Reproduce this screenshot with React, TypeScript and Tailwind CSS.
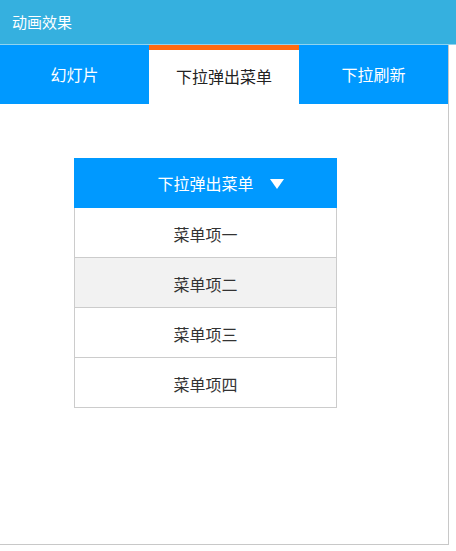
const font = { fontFamily: '"Microsoft YaHei", "Noto Sans CJK SC", sans-serif' };

const tabs = ["幻灯片", "下拉弹出菜单", "下拉刷新"];
const items = ["菜单项一", "菜单项二", "菜单项三", "菜单项四"];

export default function App() {
  const active = 1;

  return (
    <div className="w-[456px] h-[551px] bg-white" style={font}>
      <div className="h-[45px] bg-[#35b0df] border-b border-[#8fd3ef] flex items-center pl-3 text-[15px] text-white">
        动画效果
      </div>

      <div className="w-[449px] h-[500px] border-r border-b border-[#c8c8c8] flex flex-col">
        <div className="flex h-[59px]">
          {tabs.map((t, i) =>
            i === active ? (
              <div
                key={t}
                className="w-[150px] border-t-[5px] border-[#ff6a10] bg-white flex items-center justify-center text-base text-[#222] pb-[3px]"
              >
                {t}
              </div>
            ) : (
              <div
                key={t}
                className="w-[149px] bg-[#0099ff] flex items-center justify-center text-base text-white pb-px"
              >
                {t}
              </div>
            )
          )}
        </div>

        <div className="pt-[54px] pl-[74px]">
          <div className="w-[263px]">
            <div className="relative h-[50px] bg-[#0099ff] flex items-center justify-center text-base text-white">
              下拉弹出菜单
              <span className="absolute left-[196px] top-[21px] w-0 h-0 border-l-[7px] border-r-[7px] border-t-[10px] border-l-transparent border-r-transparent border-t-white" />
            </div>
            <div className="border-l border-r border-[#cccccc]">
              {items.map((it, i) => (
                <div
                  key={it}
                  className={`h-[50px] border-b border-[#cccccc] flex items-center justify-center text-base text-[#333] pt-[3px] ${
                    i === 1 ? "bg-[#f2f2f2]" : "bg-white"
                  }`}
                >
                  {it}
                </div>
              ))}
            </div>
          </div>
        </div>
      </div>
    </div>
  );
}
